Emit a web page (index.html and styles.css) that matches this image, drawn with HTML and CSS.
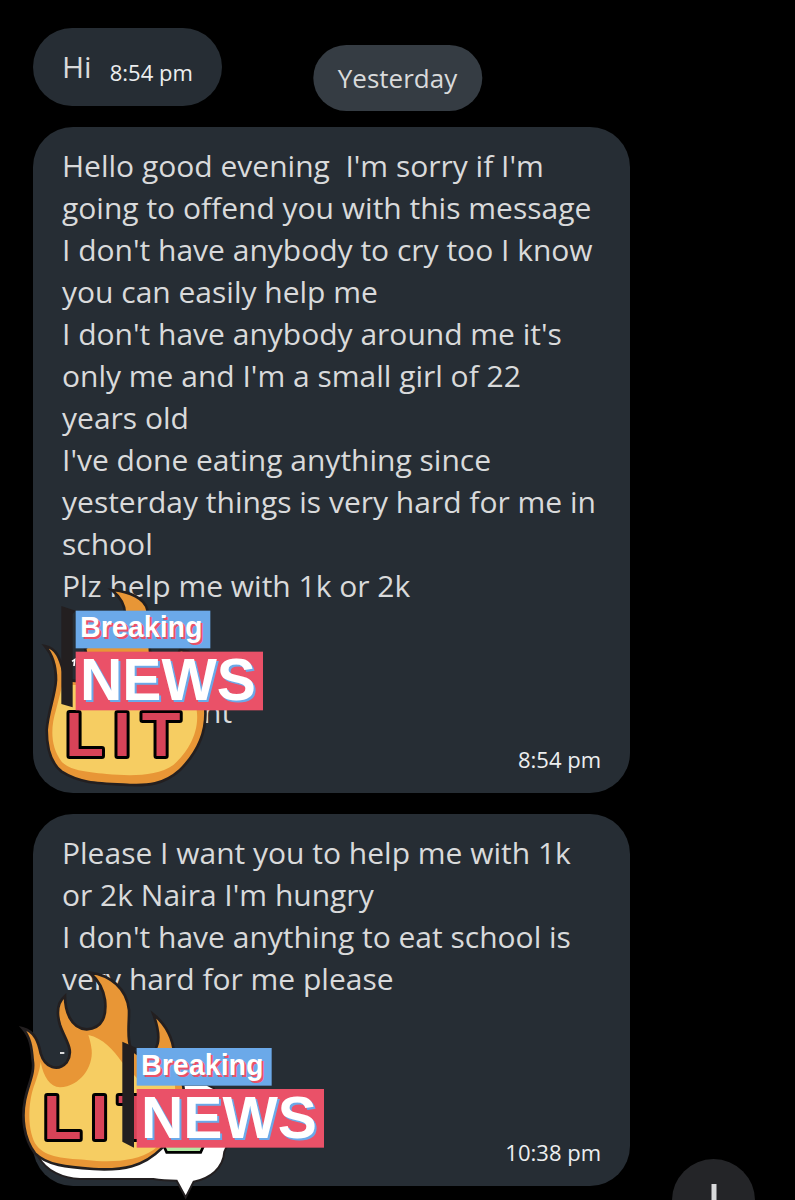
FILE: index.html
```
<!DOCTYPE html>
<html lang="en">
<head>
	<meta charset="UTF-8">
	<meta name="viewport" content="width=device-width, initial-scale=1.0">
	<title>Messages</title>
	<link rel="stylesheet" href="styles.css">
</head>
<body>
	<main id="chat">
		<div class="date">Yesterday</div>

		<div class="bubble short">
			<span class="text">Hi</span>
			<time class="time">8:54 pm</time>
		</div>

		<div class="bubble">
			<p class="text">Hello good evening&nbsp; I'm sorry if I'm<br>
			going to offend you with this message<br>
			I don't have anybody to cry too I know<br>
			you can easily help me<br>
			I don't have anybody around me it's<br>
			only me and I'm a small girl of 22<br>
			years old<br>
			I've done eating anything since<br>
			yesterday things is very hard for me in<br>
			school<br>
			Plz help me with 1k or 2k<br>
			<br>
			<br>
			<span class="covered">nt</span></p>
			<time class="time">8:54 pm</time>

			<svg class="sticker first" viewBox="0 0 780 690">
				<!-- flame -->
				<path class="flame" d="M45 228C80 235 90 265 100 305C115 345 160 340 180 300L165 235L285 140C288 105 270 80 245 60C300 65 345 85 352 120L360 245C400 280 440 270 450 240L475 245C485 300 500 370 526 420C530 500 490 560 450 600C400 645 350 647 300 645C200 640 150 640 95 605C50 570 50 500 50 480C55 420 75 380 78 330C78 280 60 245 45 228Z"/>
				<path class="core" d="M97 345H500V420C510 490 470 550 430 585C380 620 300 618 230 612C160 605 120 600 95 575C60 530 62 470 78 420Z"/>
				<text class="lit" x="106 250 335" y="559">LIT</text>
				<!-- news banner -->
				<path class="side" d="M94 108L137 122L128 132V412L94 402Z"/>
				<path class="tick" d="M126 274L134 269L132 288"/>
				<rect class="blue" x="137" y="122" width="404" height="113"/>
				<rect class="red" x="137" y="245" width="562" height="176"/>
				<text class="breaking" x="150" y="202">Breaking</text>
				<text class="news" x="150" y="391">NEWS</text>
			</svg>
		</div>

		<div class="bubble last">
			<p class="text">Please I want you to help me with 1k<br>
			or 2k Naira I'm hungry<br>
			I don't have anything to eat school is<br>
			very hard for me please</p>
			<time class="time">10:38 pm</time>

			<svg class="sticker second" viewBox="0 0 990 720">
				<!-- speech balloon behind the flame -->
				<path class="balloon" d="M85 590C110 635 160 655 210 657H430C460 662 480 662 500 662L527 712L551 665C600 655 640 625 643 575L650 560L612 385L590 374H520L400 500Z"/>
				<path class="green" d="M460 555L470 577H572L582 555Z"/>
				<!-- flame -->
				<path class="flame" d="M38 205C75 215 85 245 92 280C105 325 145 335 170 307C195 270 165 240 150 195C138 155 145 125 165 108C165 150 180 205 230 208C280 205 290 165 285 120C280 85 265 60 240 38C300 45 350 85 357 150C358 190 350 230 362 265C395 300 430 300 443 250C450 220 440 190 430 163C470 195 490 240 492 280L520 380C530 450 510 520 455 565C400 620 340 632 250 627C170 622 110 615 75 580C40 535 35 470 45 420C55 370 75 340 68 300C65 260 60 230 38 205Z"/>
				<path class="core" d="M92 305C100 350 120 380 150 382C210 380 250 320 245 270C243 250 238 235 235 225C280 235 310 270 335 305L400 375H495C500 470 470 540 430 570C380 605 300 608 230 600C150 595 100 590 75 550C50 500 55 420 75 370C85 340 90 325 92 305Z"/>
				<text class="lit" x="99 242 324" y="537">LIT</text>
				<path class="tick" d="M150 279H163"/>
				<!-- news banner -->
				<path class="side" d="M337 245L380 264L372 275V563L337 545Z"/>
				<rect class="blue" x="380" y="264" width="405" height="113"/>
				<rect class="red" x="380" y="387" width="562" height="176"/>
				<text class="breaking" x="393" y="344">Breaking</text>
				<text class="news" x="393" y="533">NEWS</text>
			</svg>
		</div>

		<button class="scroll" type="button" aria-label="Scroll to latest">
			<svg viewBox="0 0 40 40"><path d="M20 3V36M7 23L20 36L33 23"/></svg>
		</button>
	</main>
</body>
</html>
```

FILE: styles.css
```
:root{
	--bubble: #262d34;
	--text-color: #d9dadb;
	--line: #231f20;
}

body{
	margin: 0;
	background: #000;
	color: var(--text-color);
	font-family: "Open Sans", "Noto Sans", sans-serif;
}

#chat{
	position: relative;
	box-sizing: border-box;
	min-height: 100vh;
	padding: 28px 165px 14px 33px;
	display: flex;
	flex-flow: column nowrap;
	align-items: stretch;
	gap: 21px;
	overflow: hidden;
}

.date{
	position: absolute;
	top: 45px;
	left: 50%;
	transform: translateX(-50%);
	padding: 0 25px;
	border-radius: 33px;
	background: #353c43;
	font-size: 26px;
	line-height: 66px;
}

.bubble{
	position: relative;
	display: flex;
	flex-flow: column nowrap;
	padding: 18px 29px;
	border-radius: 40px;
	background: var(--bubble);
}

.bubble.short{
	flex-flow: row nowrap;
	align-self: flex-start;
	align-items: flex-end;
	gap: 18px;
}

.text{
	margin: 0;
	font-size: 30px;
	line-height: 42px;
	white-space: nowrap;
}

.covered{
	padding-left: 141px;
}

.time{
	align-self: flex-end;
	margin-top: 10px;
	color: #eceeef;
	font-size: 22px;
	line-height: 32px;
}

.short .time{
	margin: 0;
}

.last .time{
	margin-top: 136px;
}

.sticker{
	position: absolute;
}

.first{
	top: 443px;
	left: -3px;
	width: 260px;
	height: 230px;
}

.second{
	top: 146px;
	left: -23px;
	width: 330px;
	height: 240px;
}

.flame{
	fill: #e89636;
	stroke: var(--line);
	stroke-width: 8;
}

.core{
	fill: #f6cd62;
}

.balloon{
	fill: #fff;
	stroke: var(--line);
	stroke-width: 6;
}

.green{
	fill: #b3e8a4;
	stroke: #000;
	stroke-width: 8;
}

.side{
	fill: var(--line);
}

.tick{
	fill: none;
	stroke: #fff;
	stroke-width: 5;
}

.blue{
	fill: #6ba9e9;
}

.red{
	fill: #ea5168;
}

.sticker text{
	font-family: "Liberation Sans", sans-serif;
	font-weight: bold;
}

.breaking{
	fill: #fff;
	font-size: 86px;
	text-shadow: 2px 2px #ea5168;
}

.news{
	fill: #fff;
	font-size: 176px;
	text-shadow: 2px 2px #6ba9e9;
}

.lit{
	fill: #d84358;
	stroke: #000;
	stroke-width: 18;
	stroke-linejoin: round;
	paint-order: stroke;
	font-size: 190px;
}

.scroll{
	position: absolute;
	right: 40px;
	bottom: -42px;
	width: 83px;
	height: 83px;
	padding: 0;
	display: flex;
	justify-content: center;
	align-items: center;
	border: none;
	border-radius: 50%;
	background: #242528;
	cursor: pointer;
}

.scroll svg{
	width: 40px;
	height: 40px;
	fill: none;
	stroke: #d9dadb;
	stroke-width: 5;
}
```
